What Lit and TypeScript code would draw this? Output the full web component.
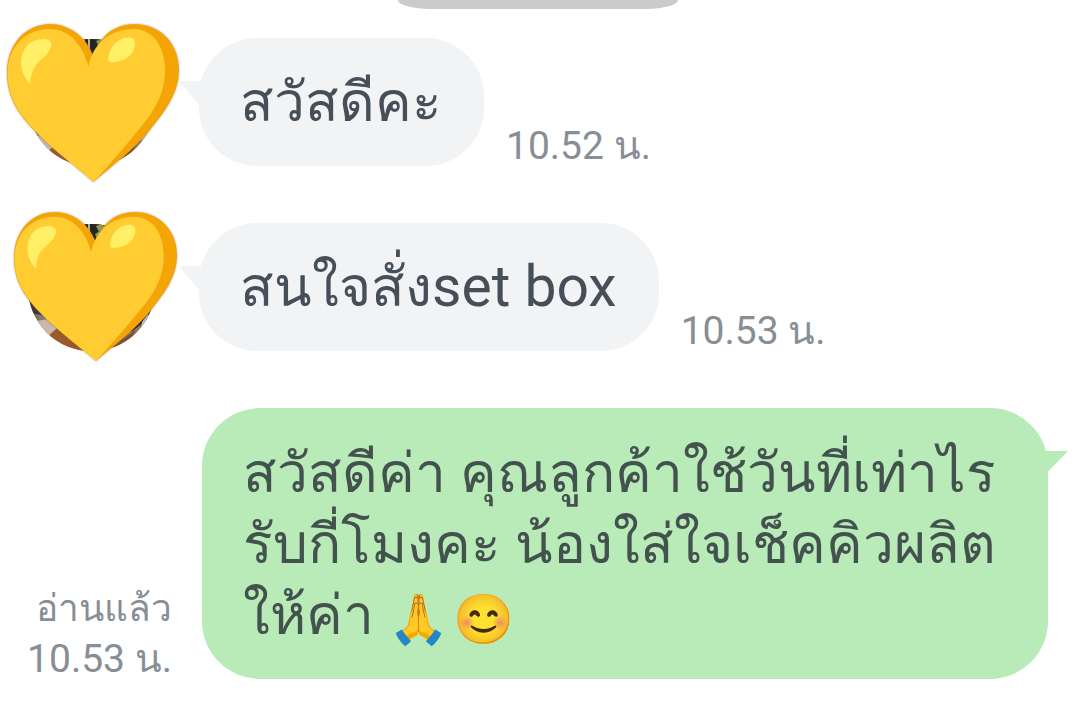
import { LitElement, html, css } from "lit";
import { customElement, property } from "lit/decorators.js";

@customElement("chat-avatar")
class ChatAvatar extends LitElement {
  @property({ type: Boolean, reflect: true }) compact = false;

  static styles = css`
    :host {
      display: block;
      position: relative;
      flex: none;
      width: 127px;
      height: 127px;
      margin: 0 44px 0 28px;
    }
    .photo {
      display: block;
      width: 100%;
      height: 100%;
    }
    .heart {
      position: absolute;
      left: -21px;
      top: -15px;
      width: 172px;
      height: 158px;
      overflow: visible;
      filter: drop-shadow(0 0 1px rgba(90, 90, 120, 0.45));
    }
    :host([compact]) .heart {
      left: -14px;
      top: -12px;
      width: 163px;
      height: 149px;
    }
  `;

  render() {
    return html`
      <svg class="photo" viewBox="0 0 127 127" aria-hidden="true">
        <defs>
          <clipPath id="round"><circle cx="63.500" cy="63.500" r="63.500" /></clipPath>
        </defs>
        <g clip-path="url(#round)">
          <rect width="127" height="127" fill="#8a6040" />
          <rect x="48" width="34" height="30" fill="#26261f" />
          <path d="M54 0h3v26h-3zM60 0h2v26h-2z" fill="#b9b3a2" />
          <path d="M68 2l6-2 5 5-8 3zM67 10l5-3 4 4-6 6z" fill="#8f9a55" />
          <path d="M0 60h40v40L0 88z" fill="#3d3935" />
          <path d="M4 76l12 2 10 14-10-2zM8 90l10 2 6 8-12 0z" fill="#81796f" />
          <path d="M8 97l26-4 14 18-26 8z" fill="#c9b8ab" />
          <path d="M20 112l14-12 32 27H24z" fill="#9b5a2b" />
          <path d="M127 74l-30 28-4 25h34z" fill="#8c7a70" />
          <path d="M127 82l-16 10-12 12 4 4 24-18z" fill="#29282a" />
          <path d="M114 98l6-8 3 4-10 12z" fill="#c4bec5" />
          <path d="M108 106l-30 21h20z" fill="#80502f" />
        </g>
      </svg>
      <svg class="heart" viewBox="20 42 517 474" preserveAspectRatio="none" role="img" aria-label="Yellow heart">
        <path fill="#f5a405"
          d="M280 140C258 78 205 42 150 42C78 42 20 100 20 188C20 268 58 314 100 360C158 420 228 470 280 516C340 465 405 414 450 360C500 298 537 248 537 178C537 100 480 42 404 42C342 42 298 78 280 140Z" />
        <path fill="#ffcc32"
          d="M265 170C246 98 202 57 148 57C78 57 22 108 22 190C22 268 60 314 102 360C160 420 228 470 280 516C330 461 366 420 405 372C458 310 495 258 495 180C495 112 460 57 400 57C330 57 276 104 265 170Z" />
        <path fill="#fff068"
          d="M153 102C153 82 112 82 88 100C54 126 54 188 90 222C91 184 104 162 126 146C146 130 153 116 153 102Z" />
        <path fill="#fff068"
          d="M405 98C404 76 370 80 350 95C330 111 318 148 328 155C342 160 372 153 390 136C402 124 406 110 405 98Z" />
      </svg>
    `;
  }
}

@customElement("app-root")
class AppRoot extends LitElement {
  static styles = css`
    :host {
      display: block;
      min-height: 100vh;
      background: #fff;
      color: #464f58;
      font-family: Roboto, "Noto Sans", sans-serif;
      font-size: 55px;
      line-height: 71px;
    }
    .chip {
      width: 26%;
      height: 9px;
      margin: 0 auto 29px;
      border-radius: 0 0 32px 32px / 0 0 9px 9px;
      background: #cbcbcb;
    }
    .thread {
      display: flex;
      flex-direction: column;
      gap: 57px;
    }
    .row {
      display: flex;
      align-items: flex-end;
    }
    .bubble {
      position: relative;
      padding: 29px 42px 28px 41px;
      border-radius: 58px;
      background: #f1f3f5;
      white-space: nowrap;
    }
    .bubble::before {
      content: "";
      position: absolute;
      top: 43px;
      left: -20px;
      width: 24px;
      height: 24px;
      background: inherit;
      clip-path: polygon(0 0, 100% 0, 100% 100%, 20px 100%);
    }
    .latin {
      font-size: 57px;
      line-height: 1;
    }
    .meta {
      margin-left: 22px;
      color: #878e96;
      font-size: 39px;
      line-height: 40px;
      white-space: nowrap;
    }
    .sent {
      padding-right: 28px;
    }
    .sent .bubble {
      flex: 1;
      padding-top: 30px;
      background: #b8ebb8;
      color: #44524f;
    }
    .sent .bubble::before {
      left: auto;
      right: -20px;
      clip-path: polygon(0 0, 100% 0, 20% 20px, 0 20px);
    }
    .sent .meta {
      display: flex;
      flex-direction: column;
      align-items: flex-end;
      gap: 10px;
      width: 172px;
      margin: 0 30px 0 0;
    }
    .read {
      font-size: 37px;
    }
    .emoji {
      display: inline-flex;
      gap: 4px;
      font-size: 49px;
      line-height: 49px;
      vertical-align: -2px;
    }
  `;

  render() {
    return html`
      <div class="chip"></div>
      <main class="thread">
        <div class="row">
          <chat-avatar></chat-avatar>
          <div class="bubble">สวัสดีคะ</div>
          <time class="meta">10.52 น.</time>
        </div>
        <div class="row">
          <chat-avatar compact></chat-avatar>
          <div class="bubble">สนใจสั่ง<span class="latin">set box</span></div>
          <time class="meta">10.53 น.</time>
        </div>
        <div class="row sent">
          <div class="meta"><span class="read">อ่านแล้ว</span><time>10.53 น.</time></div>
          <div class="bubble">
            สวัสดีค่า คุณลูกค้าใช้วันที่เท่าไร<br />รับกี่โมงคะ น้องใส่ใจเช็คคิวผลิต<br />ให้ค่า
            <span class="emoji"><span>🙏</span><span>😊</span></span>
          </div>
        </div>
      </main>
    `;
  }
}
